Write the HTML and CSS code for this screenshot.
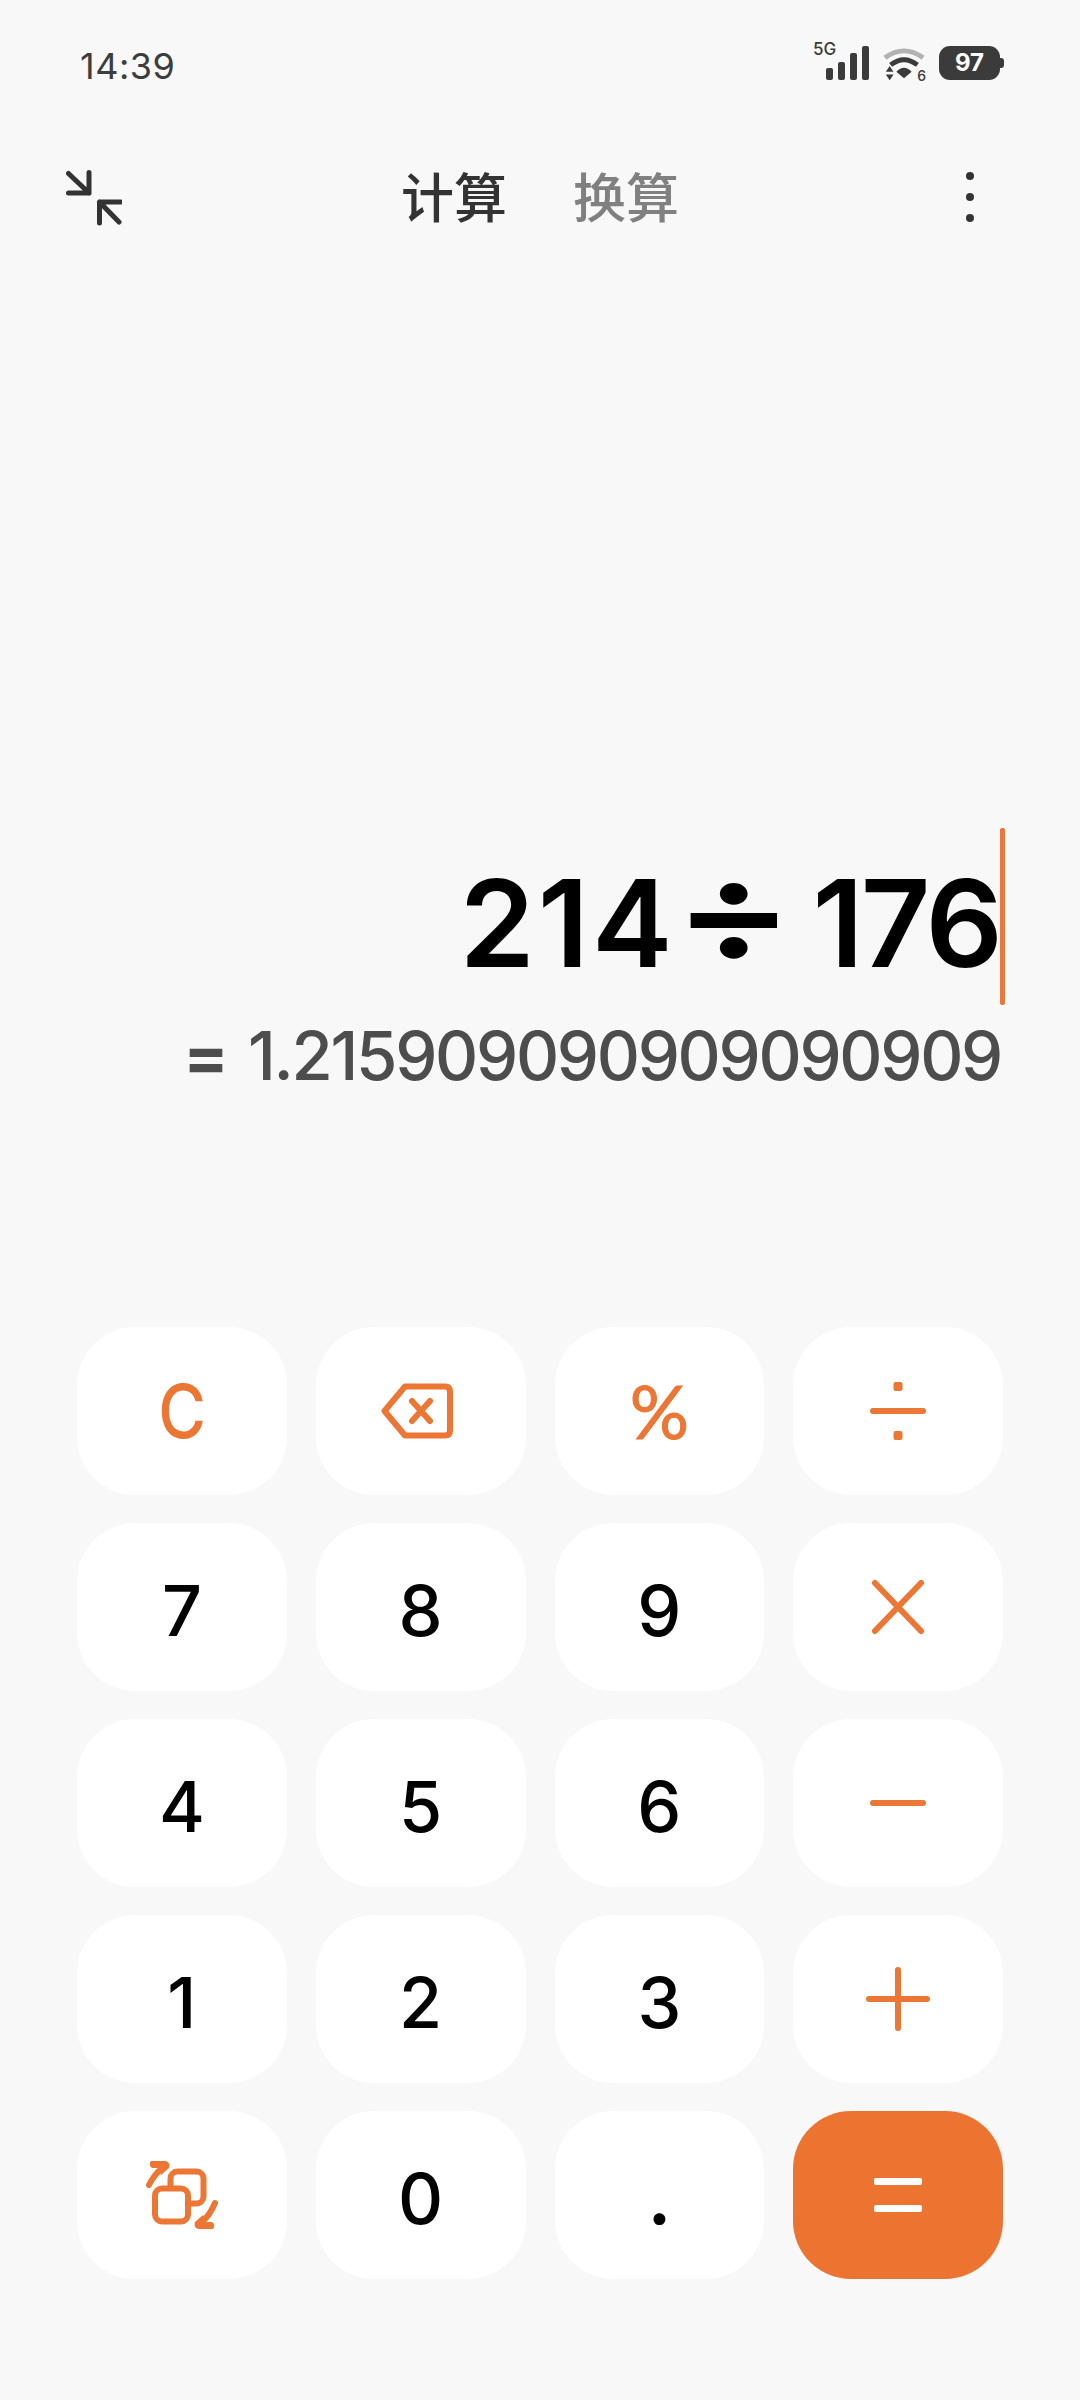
FILE: index.html
```html
<!DOCTYPE html>
<html lang="zh-CN">
<head>
    <meta charset="UTF-8">
    <meta name="viewport" content="width=device-width, initial-scale=1.0">
    <title>计算器</title>
    <link rel="stylesheet" href="styles.css">
</head>
<body>
    <!-- Barre d'état -->
    <div class="status">
        <span class="clock">14:39</span>
        <div class="status-icons">
            <div class="signal">
                <span class="signal-label">5G</span>
                <svg width="56" height="36" viewBox="0 0 56 36">
                    <rect x="13" y="22" width="7" height="12" rx="2"/>
                    <rect x="25" y="16" width="7" height="18" rx="2"/>
                    <rect x="37" y="7" width="7" height="27" rx="2"/>
                    <rect x="49" y="0" width="7" height="34" rx="2"/>
                </svg>
            </div>
            <div class="wifi">
                <svg width="44" height="36" viewBox="0 0 46 36">
                    <path class="wifi-off" d="M3 11.500Q23 -3 43 11.500"/>
                    <path class="wifi-on" d="M9 19Q23 8 37 19"/>
                    <path d="M15 26Q23 18 31 26L23 33Z"/>
                    <path d="M4 26L8 20L12 26ZM4 29H12L8 35Z"/>
                </svg>
                <span class="wifi-label">6</span>
            </div>
            <div class="battery"><span>97</span></div>
        </div>
    </div>

    <!-- Onglets -->
    <header class="topbar">
        <svg class="collapse" width="56" height="56" viewBox="0 0 56 56">
            <path d="M2.500 3.500L23 23M23 2.500V23H2.500M33.500 32H54.500M33.500 32V53M33.500 32L53 52"/>
        </svg>
        <nav class="tabs">
            <a class="tab actif">计算</a>
            <a class="tab">换算</a>
        </nav>
        <div class="menu"><i></i><i></i><i></i></div>
    </header>

    <!-- Affichage -->
    <main class="display">
        <div class="expression">
            <span class="expression-text"><span class="nombre-a">214</span><span class="divide">÷</span><span class="nombre-b">176</span></span>
            <span class="caret"></span>
        </div>
        <div class="result"><span class="result-egal">=</span> 1.215909090909090909</div>
    </main>

    <!-- Clavier -->
    <section class="keypad">
        <button class="key op"><span class="lettre">C</span></button>
        <button class="key op backspace" aria-label="effacer">
            <svg width="72" height="56" viewBox="0 0 72 56">
                <path class="line" d="M24 3.500H64Q69 3.500 69 8.500V47.500Q69 52.500 64 52.500H24L3.500 28Z" stroke-linejoin="round"/>
                <path class="line" d="M31 18L49 38M49 18L31 38"/>
            </svg>
        </button>
        <button class="key op percent">%</button>
        <button class="key op" aria-label="diviser">
            <svg width="56" height="60" viewBox="0 0 56 60">
                <path class="line" d="M3 30H53"/>
                <rect class="fill" x="23.500" y="1" width="9" height="9" rx="2"/>
                <rect class="fill" x="23.500" y="50" width="9" height="9" rx="2"/>
            </svg>
        </button>

        <button class="key">7</button>
        <button class="key">8</button>
        <button class="key">9</button>
        <button class="key op" aria-label="multiplier">
            <svg width="56" height="56" viewBox="0 0 56 56">
                <path class="line" d="M5 4L51 52M51 4L5 52"/>
            </svg>
        </button>

        <button class="key">4</button>
        <button class="key">5</button>
        <button class="key">6</button>
        <button class="key op" aria-label="soustraire">
            <svg width="56" height="8" viewBox="0 0 56 8">
                <path class="line" d="M3 4H53"/>
            </svg>
        </button>

        <button class="key">1</button>
        <button class="key">2</button>
        <button class="key">3</button>
        <button class="key op" aria-label="additionner">
            <svg width="64" height="64" viewBox="0 0 64 64">
                <path class="line" d="M3 32H61M32 3V61"/>
            </svg>
        </button>

        <button class="key op" aria-label="changer">
            <svg class="swap" width="72" height="68" viewBox="0 0 72 68">
                <rect class="line" x="24.500" y="10.500" width="33" height="32" rx="7"/>
                <rect class="line carre" x="9" y="27.500" width="33" height="33" rx="7"/>
                <path class="line" d="M3 24Q8 14 16 7"/>
                <path class="fill" d="M5 0H20Q25 2 23 7L15 14L12 7H6Q2 4 5 0Z"/>
                <path class="line" d="M69 42Q64 54 56 61"/>
                <path class="fill" d="M67 68H52Q47 66 49 61L57 54L60 61H66Q70 64 67 68Z"/>
            </svg>
        </button>
        <button class="key">0</button>
        <button class="key point">.</button>
        <button class="key equal" aria-label="égal"><i></i><i></i></button>
    </section>
</body>
</html>
```
FILE: styles.css
```css
/* Calculatrice - thème clair */
body {
    background-color: #f8f8f8;
    color: #000000;
    font-family: Inter, "Noto Sans CJK SC", sans-serif;
    margin: 0;
    padding: 0;
    width: 1080px;
    height: 2400px;
    overflow: hidden;
}

.status {
    display: flex;
    justify-content: space-between;
    height: 124px;
    padding: 46px 80px 0 80px;
    box-sizing: border-box;
}

.clock {
    font-size: 36px;
    line-height: 36px;
    height: 36px;
    margin-top: 2px;
    letter-spacing: 0.500px;
    color: #3d3d3d;
}

.status-icons {
    display: flex;
    align-items: flex-start;
    gap: 13px;
}

.status-icons svg {
    display: block;
    fill: #3b3b3b;
}

.signal,
.wifi {
    position: relative;
}

.signal-label {
    position: absolute;
    left: 0;
    top: -6px;
    font-size: 17px;
    line-height: 18px;
    font-weight: 500;
    color: #3b3b3b;
}

.wifi-off,
.wifi-on {
    fill: none;
    stroke-width: 5px;
}

.wifi-off {
    stroke: #b2b2b2;
}

.wifi-on {
    stroke: #3b3b3b;
}

.wifi-label {
    position: absolute;
    right: 0;
    top: 22px;
    font-size: 14px;
    line-height: 16px;
    font-weight: 500;
    background-color: #f8f8f8;
    color: #3b3b3b;
}

.battery {
    position: relative;
    width: 61px;
    height: 34px;
    border-radius: 11px;
    background-color: #3b3b3b;
    color: #ffffff;
    font-size: 24px;
    font-weight: 700;
    line-height: 34px;
    text-align: center;
}

.battery::after {
    content: '';
    position: absolute;
    left: 61px;
    top: 12px;
    width: 4px;
    height: 10px;
    border-radius: 0 3px 3px 0;
    background-color: #3b3b3b;
}

.topbar {
    display: grid;
    grid-template-columns: 1fr auto 1fr;
    grid-template-rows: 60px;
    align-items: center;
    height: 60px;
    margin-top: 44px;
    padding: 0 66px;
}

.collapse {
    fill: none;
    stroke: #333333;
    stroke-width: 5px;
    stroke-linecap: round;
    stroke-linejoin: round;
}

.tabs {
    display: flex;
    gap: 66px;
    padding-bottom: 6px;
}

.tab {
    font-family: "Noto Sans CJK SC", sans-serif;
    font-size: 53px;
    line-height: 60px;
    font-weight: 500;
    color: #808080;
}

.tab.actif {
    color: #333333;
}

.menu {
    justify-self: end;
    display: flex;
    flex-direction: column;
    gap: 13px;
    margin: 0 40px 2px 0;
}

.menu i {
    display: block;
    width: 8px;
    height: 8px;
    border-radius: 50%;
    background-color: #333333;
}

.display {
    padding: 600px 75px 0 0;
    display: flex;
    flex-direction: column;
    align-items: flex-end;
}

.expression {
    display: flex;
    height: 177px;
    align-items: center;
}

.expression-text {
    font-size: 121px;
    font-weight: 600;
    line-height: 130px;
    padding-top: 12px;
    white-space: nowrap;
}

.nombre-a {
    letter-spacing: 3px;
}

.nombre-b {
    letter-spacing: -3px;
}

.divide {
    display: inline-block;
    width: 90px;
    margin: 0 37px 0 10px;
    font-size: 140px;
    line-height: 100px;
    text-align: center;
    vertical-align: 6px;
    transform: scaleX(1.28);
}

.caret {
    width: 5px;
    height: 177px;
    border-radius: 2px;
    background-color: #e9773a;
}

.result {
    margin: 21px 4px 0 0;
    font-size: 67px;
    font-weight: 500;
    line-height: 60px;
    letter-spacing: -2.300px;
    color: #4d4d4d;
}

.result-egal {
    font-weight: 700;
    margin-right: 6px;
}

.keypad {
    display: grid;
    grid-template-columns: repeat(4, 1fr);
    grid-auto-rows: 168px;
    gap: 28px 29px;
    padding: 0 77px;
    margin-top: 241px;
}

.key {
    display: flex;
    align-items: center;
    justify-content: center;
    padding: 8px 0 0 0;
    border: none;
    border-radius: 58px;
    background-color: #ffffff;
    color: #000000;
    font-family: Inter, sans-serif;
    font-size: 70px;
    font-weight: 500;
    line-height: 80px;
}

.key.op {
    padding: 0;
    color: #ec7634;
}

.lettre {
    display: inline-block;
    font-size: 74px;
    font-weight: 500;
    transform: scaleX(0.88);
}

.key.backspace {
    padding-right: 8px;
}

.key.percent {
    font-family: Lato, sans-serif;
    font-size: 74px;
    font-weight: 400;
    -webkit-text-stroke: 1px #ec7634;
}

.key.point {
    font-weight: 700;
}

.line {
    fill: none;
    stroke: #ec7634;
    stroke-width: 6px;
    stroke-linecap: round;
}

.line.carre {
    fill: #ffffff;
}

.fill {
    fill: #ec7634;
}

.key.equal {
    flex-direction: column;
    gap: 20px;
    padding: 0;
    background-color: #ed7330;
}

.equal i {
    display: block;
    width: 48px;
    height: 7px;
    border-radius: 2px;
    background-color: #ffffff;
}
```
